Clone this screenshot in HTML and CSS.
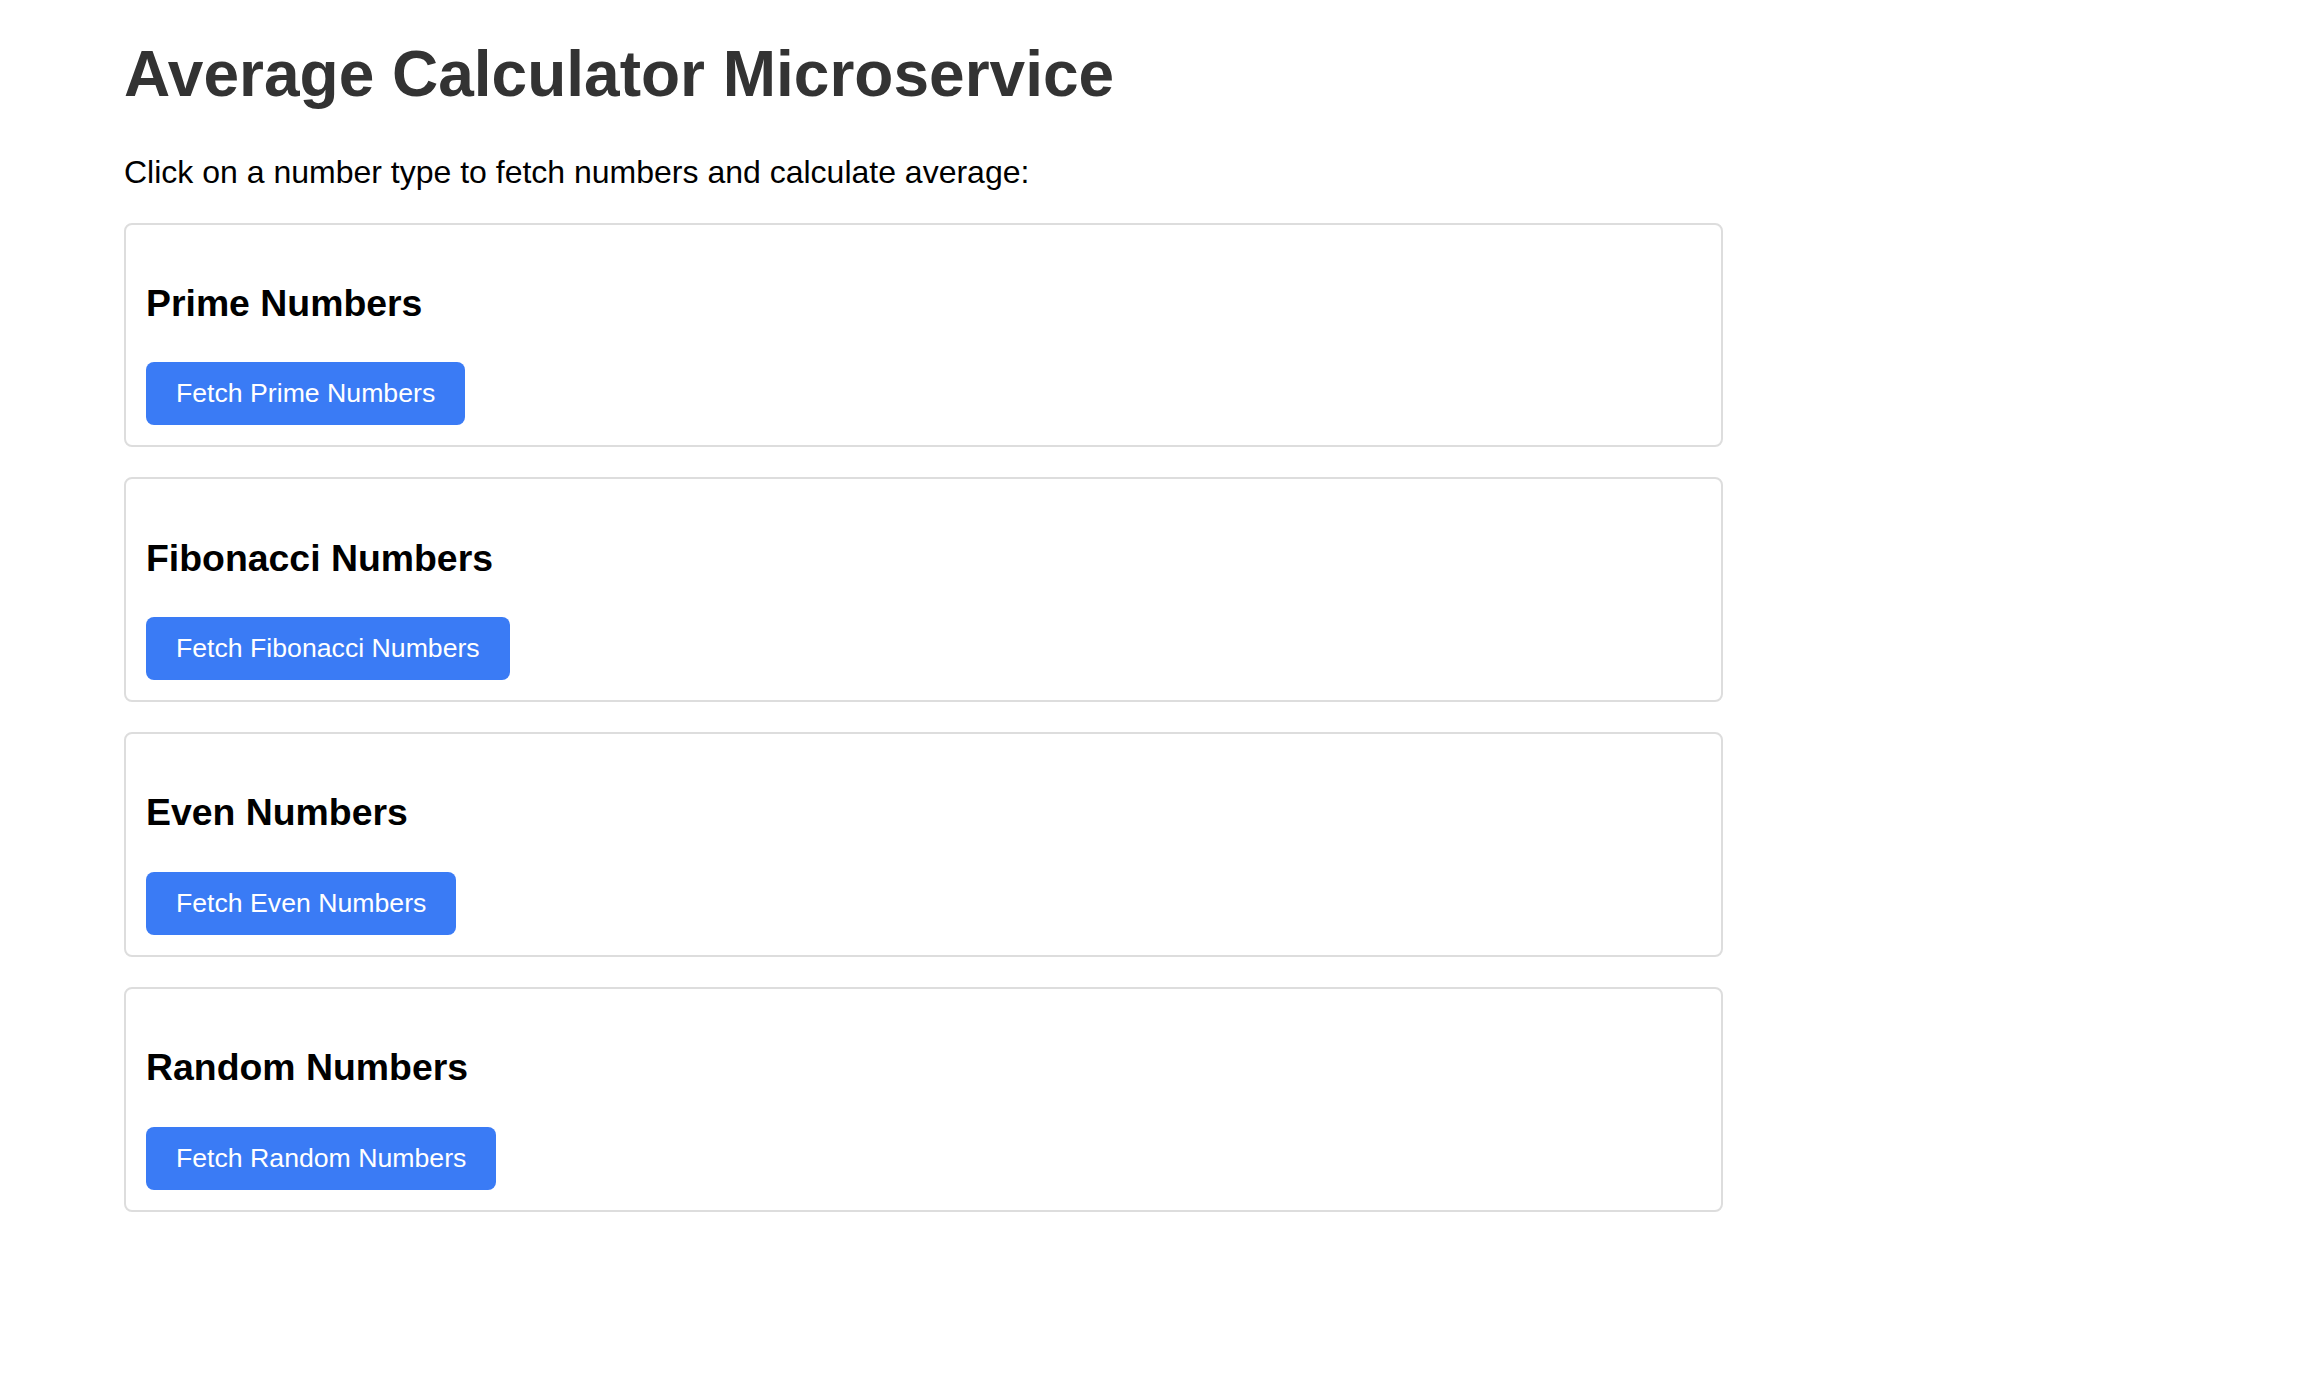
FILE: index.html
```html
<!DOCTYPE html>
<html lang="en">
<head>
<meta charset="utf-8">
<title>Average Calculator Microservice</title>
<link rel="stylesheet" href="styles.css">
</head>
<body>
<main class="page">
  <h1 class="title">Average Calculator Microservice</h1>
  <p class="intro">Click on a number type to fetch numbers and calculate average:</p>
  <section class="card">
    <h3 class="card-title">Prime Numbers</h3>
    <button class="fetch-btn">Fetch Prime Numbers</button>
  </section>
  <section class="card">
    <h3 class="card-title">Fibonacci Numbers</h3>
    <button class="fetch-btn">Fetch Fibonacci Numbers</button>
  </section>
  <section class="card">
    <h3 class="card-title">Even Numbers</h3>
    <button class="fetch-btn">Fetch Even Numbers</button>
  </section>
  <section class="card">
    <h3 class="card-title">Random Numbers</h3>
    <button class="fetch-btn">Fetch Random Numbers</button>
  </section>
</main>
</body>
</html>
```
FILE: styles.css
```css
html, body {
  margin: 0;
  padding: 0;
  background: #ffffff;
}

body {
  font-family: "Liberation Sans", Arial, sans-serif;
  color: #000;
}

.page {
  width: 1599px;
  padding: 36.5px 0 40px 124px;
}

.title {
  margin: 0 0 43px 0;
  font-size: 64px;
  font-weight: bold;
  color: #333333;
  line-height: normal;
}

.intro {
  margin: 0 0 32px 0;
  font-size: 32px;
  line-height: normal;
}

.card {
  border: 2px solid #dddddd;
  border-radius: 8px;
  padding: 20px;
  margin-bottom: 30px;
}

.card-title {
  margin: 37.4px 0;
  font-size: 37.4px;
  font-weight: bold;
  line-height: normal;
}

.fetch-btn {
  display: inline-block;
  font-family: "Liberation Sans", Arial, sans-serif;
  font-size: 26.67px;
  line-height: normal;
  color: #ffffff;
  background: #3a7bf5;
  border: none;
  border-radius: 8px;
  padding: 16px 30px;
  cursor: pointer;
}
```
